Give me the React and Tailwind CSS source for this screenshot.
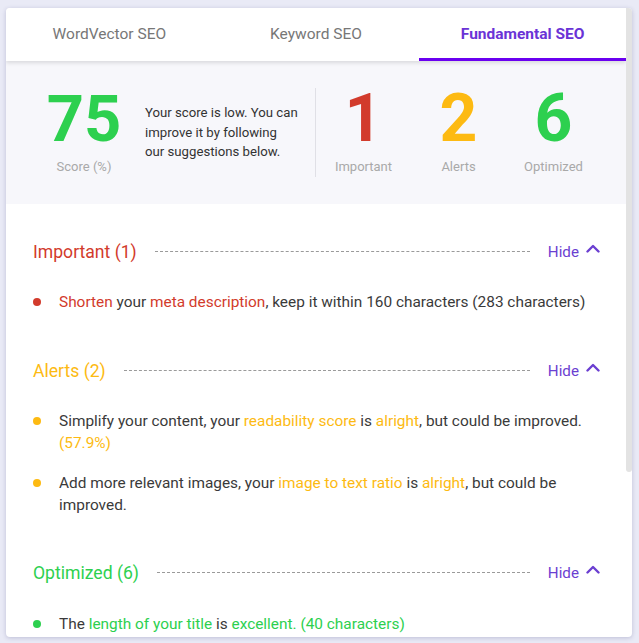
import React from "react";

const RED = "text-[#d23b2c]";
const YEL = "text-[#fdba12]";
const GRN = "text-[#2dd04f]";

function Chevron() {
  return (
    <svg width="14" height="9" viewBox="0 0 14 9" className="mb-[6px]">
      <path d="M1.5 7.5 L7 2 L12.5 7.5" fill="none" stroke="#6b3fd1" strokeWidth="2.4" strokeLinecap="round" strokeLinejoin="round" />
    </svg>
  );
}

function Heading({ title, color }) {
  return (
    <div className="flex items-center h-[26px]">
      <div className={`text-[17.6px] leading-[26px] ${color}`}>{title}</div>
      <div className="flex-1 mx-[18px] border-t border-dashed border-[#9a9a9a] mt-[-1px]"></div>
      <div className="flex items-center gap-[7px]">
        <span className="text-[15.2px] text-[#6b3fd1]">Hide</span>
        <Chevron />
      </div>
    </div>
  );
}

function Item({ dot, children }) {
  return (
    <div className="flex items-start">
      <div className={`w-[8px] h-[8px] rounded-full ${dot} mt-[7px] shrink-0`}></div>
      <div className="ml-[18px] text-[15.4px] leading-[22px] text-[#3a3a3a]">{children}</div>
    </div>
  );
}

function Stat({ n, label, color }) {
  return (
    <div className="w-[95px] flex flex-col items-center">
      <div className={`text-[66px] leading-[66px] font-bold ${color}`}>{n}</div>
      <div className="mt-[5px] text-[13px] leading-[20px] text-[#a9a9a9]">{label}</div>
    </div>
  );
}

export default function App() {
  return (
    <div className="min-h-screen bg-[#e9eaf6] pl-[6px] pt-[8px]" style={{ fontFamily: "Roboto, 'Liberation Sans', sans-serif" }}>
      <div className="relative w-[626px] h-[629px] bg-white rounded-[4px] shadow-[0_1px_4px_rgba(60,60,120,0.25)] overflow-hidden">
        <div className="w-[620px]">
          {/* Tabs */}
          <div className="relative z-10 flex h-[53px] bg-white shadow-[0_2px_4px_rgba(0,0,0,0.12)]">
            <div className="flex-1 flex items-center justify-center text-[15.5px] text-[#777]">WordVector SEO</div>
            <div className="flex-1 flex items-center justify-center text-[15.5px] text-[#777]">Keyword SEO</div>
            <div className="flex-1 flex items-center justify-center text-[15.5px] font-bold text-[#6a33d6] border-b-[3px] border-[#6a00f0] pt-[3px]">Fundamental SEO</div>
          </div>
          {/* Stats */}
          <div className="bg-[#f7f7fb] h-[143px] pt-[25px] flex items-start">
            <div className="ml-[28px] w-[100px] flex flex-col items-center">
              <div className={`text-[65px] leading-[66px] font-bold ${GRN}`}>75</div>
              <div className="mt-[5px] text-[13px] leading-[20px] text-[#a9a9a9]">Score (%)</div>
            </div>
            <div className="ml-[11px] w-[170px] mt-[17px] text-[13.2px] leading-[19.5px] text-[#333]">
              Your score is low. You can<br />improve it by following<br />our suggestions below.
            </div>
            <div className="w-px h-[89px] bg-[#e0e0e6] mt-[2px]"></div>
            <Stat n="1" label="Important" color={RED} />
            <Stat n="2" label="Alerts" color={YEL} />
            <Stat n="6" label="Optimized" color={GRN} />
          </div>
          {/* Content */}
          <div className="pt-[35px] pl-[27px] pr-[26px]">
            <Heading title="Important (1)" color={RED} />
            <div className="mt-[26px] flex flex-col gap-[18px]">
              <Item dot="bg-[#d23b2c]">
                <span className={RED}>Shorten</span> your <span className={RED}>meta description</span>, keep it within 160 characters (283 characters)
              </Item>
            </div>
            <div className="mt-[45px]">
              <Heading title="Alerts (2)" color={YEL} />
            </div>
            <div className="mt-[26px] flex flex-col gap-[18px]">
              <Item dot="bg-[#fdba12]">
                Simplify your content, your <span className={YEL}>readability score</span> is <span className={YEL}>alright</span>, but could be improved. <span className={YEL}>(57.9%)</span>
              </Item>
              <Item dot="bg-[#fdba12]">
                Add more relevant images, your <span className={YEL}>image to text ratio</span> is <span className={YEL}>alright</span>, but could be improved.
              </Item>
            </div>
            <div className="mt-[44px]">
              <Heading title="Optimized (6)" color={GRN} />
            </div>
            <div className="mt-[27px] flex flex-col gap-[18px]">
              <Item dot="bg-[#2dd04f]">
                The <span className={GRN}>length of your title</span> is <span className={GRN}>excellent.</span> <span className={GRN}>(40 characters)</span>
              </Item>
            </div>
          </div>
        </div>
        <div className="absolute top-0 right-0 w-[6px] h-[464px] bg-[#e3e3e3] rounded-b-[3px] z-20"></div>
      </div>
    </div>
  );
}
